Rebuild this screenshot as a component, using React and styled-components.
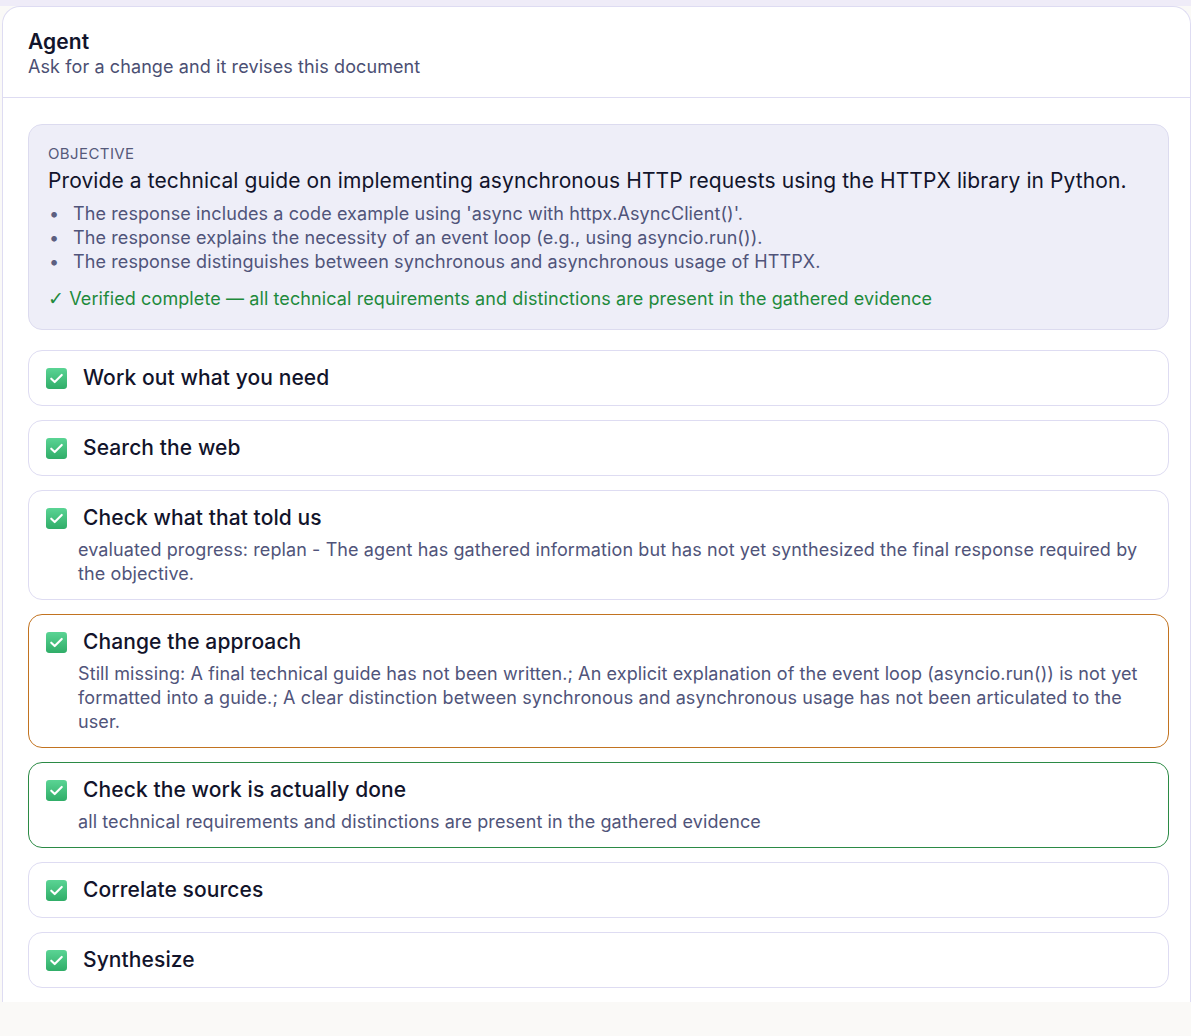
import React from 'react';
import styled, { createGlobalStyle } from 'styled-components';

const GlobalStyle = createGlobalStyle`
  html, body {
    margin: 0;
    padding: 0;
    background: #faf9f7;
    font-family: Inter, "Noto Sans", "Liberation Sans", sans-serif;
    letter-spacing: 0.1px;
    color: #15172e;
  }
`;

const Page = styled.div`
  width: 1191px;
  height: 1036px;
  padding: 6px 0 0 2px;
  box-sizing: border-box;
  background: linear-gradient(#efecf8 0 6px, #faf9f7 6px);
`;

const Panel = styled.section`
  height: 996px;
  overflow: hidden;
  background: #ffffff;
  border: 1px solid #dedcf2;
  border-bottom: none;
  border-radius: 18px 18px 0 0;
  box-sizing: border-box;
`;

const Header = styled.header`
  padding: 22px 24px 18px 25px;
  border-bottom: 1px solid #dedcf2;
`;

const Title = styled.h2`
  margin: 0;
  font-size: 21px;
  line-height: 26px;
  font-weight: 600;
  color: #12142b;
`;

const Subtitle = styled.p`
  margin: 0;
  font-size: 18px;
  line-height: 24px;
  color: #4b4f73;
`;

const Body = styled.div`
  padding: 26px 21px 14px 25px;
  display: flex;
  flex-direction: column;
  gap: 14px;
`;

const Objective = styled.div`
  background: #eeeef8;
  border: 1px solid #dcdbef;
  border-radius: 14px;
  padding: 19px 20px 18px 19px;
  margin-bottom: 6px;
`;

const Label = styled.div`
  font-size: 15px;
  line-height: 20px;
  letter-spacing: 0.4px;
  color: #55597a;
  text-transform: uppercase;
`;

const Goal = styled.div`
  margin-top: 4px;
  font-size: 21px;
  line-height: 26px;
  color: #12142b;
`;

const Criteria = styled.ul`
  margin: 8px 0 0;
  padding: 0;
  list-style: none;
  font-size: 18px;
  line-height: 24px;
  color: #50547a;
`;

const Criterion = styled.li`
  display: flex;
  &::before {
    content: '•';
    flex: 0 0 24px;
    padding-left: 1px;
    color: #5c5f80;
  }
`;

const Verified = styled.div`
  margin-top: 13px;
  height: 24px;
  font-size: 18px;
  line-height: 24px;
  color: #1e8a3c;
`;

const Tick = styled.span`
  font-family: "DejaVu Sans", sans-serif;
  font-size: 19px;
  line-height: 0;
`;

const tones = {
  default: '#dedcf2',
  warn: '#c27320',
  done: '#2b8a45',
};

const Step = styled.div`
  background: #ffffff;
  border: 1px solid ${p => tones[p.$tone || 'default']};
  border-radius: 14px;
  padding: 13px 26px 13px 17px;
`;

const StepHead = styled.div`
  display: flex;
  align-items: center;
  gap: 16px;
`;

const StepTitle = styled.div`
  font-size: 21px;
  line-height: 28px;
  font-weight: 500;
  color: #12142b;
`;

const StepNote = styled.div`
  margin: 6px 0 0 32px;
  font-size: 18px;
  line-height: 24px;
  color: #50547a;
`;

function CheckBox() {
  return (
    <svg width="21" height="21" viewBox="0 0 20 20" aria-hidden="true">
      <defs>
        <linearGradient id="tick" x1="0" y1="0" x2="0" y2="1">
          <stop offset="0" stopColor="#5ad494" />
          <stop offset="1" stopColor="#30ad68" />
        </linearGradient>
      </defs>
      <rect x="0" y="0" width="20" height="20" rx="3" fill="url(#tick)" />
      <path d="M5 10.2l3.3 3.2 6.7-6.8" fill="none" stroke="#fff" strokeWidth="2" strokeLinecap="round" strokeLinejoin="round" />
    </svg>
  );
}

const steps = [
  { title: 'Work out what you need' },
  { title: 'Search the web' },
  {
    title: 'Check what that told us',
    note: 'evaluated progress: replan - The agent has gathered information but has not yet synthesized the final response required by the objective.',
  },
  {
    title: 'Change the approach',
    tone: 'warn',
    note: 'Still missing: A final technical guide has not been written.; An explicit explanation of the event loop (asyncio.run()) is not yet formatted into a guide.; A clear distinction between synchronous and asynchronous usage has not been articulated to the user.',
  },
  {
    title: 'Check the work is actually done',
    tone: 'done',
    note: 'all technical requirements and distinctions are present in the gathered evidence',
  },
  { title: 'Correlate sources' },
  { title: 'Synthesize' },
];

export default function App() {
  return (
    <Page>
      <GlobalStyle />
      <Panel>
        <Header>
          <Title>Agent</Title>
          <Subtitle>Ask for a change and it revises this document</Subtitle>
        </Header>
        <Body>
          <Objective>
            <Label>Objective</Label>
            <Goal>Provide a technical guide on implementing asynchronous HTTP requests using the HTTPX library in Python.</Goal>
            <Criteria>
              <Criterion>The response includes a code example using 'async with httpx.AsyncClient()'.</Criterion>
              <Criterion>The response explains the necessity of an event loop (e.g., using asyncio.run()).</Criterion>
              <Criterion>The response distinguishes between synchronous and asynchronous usage of HTTPX.</Criterion>
            </Criteria>
            <Verified><Tick>✓</Tick> Verified complete — all technical requirements and distinctions are present in the gathered evidence</Verified>
          </Objective>
          {steps.map(step => (
            <Step key={step.title} $tone={step.tone}>
              <StepHead>
                <CheckBox />
                <StepTitle>{step.title}</StepTitle>
              </StepHead>
              {step.note && <StepNote>{step.note}</StepNote>}
            </Step>
          ))}
        </Body>
      </Panel>
    </Page>
  );
}
